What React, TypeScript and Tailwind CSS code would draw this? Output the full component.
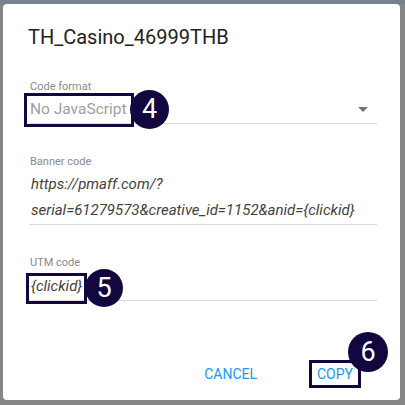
import React from 'react'

function Badge({ n, className }: { n: string; className: string }) {
  return (
    <span
      className={
        'absolute flex items-center justify-center rounded-full bg-[#12083f] text-white text-[27px] leading-none ' +
        className
      }
    >
      {n}
    </span>
  )
}

export default function App() {
  return (
    <div className="h-[405px] w-[405px] bg-[#868686] border-t-4 border-[#76828b] pl-[3px] pr-[5px] pb-[5px] font-['Roboto',sans-serif]">
      <div className="h-full w-full bg-white rounded-[4px] flex flex-col">
        {/* Title */}
        <h2 className="pt-[21px] pl-[25px] text-[20px] leading-[24px] text-[#212121]">TH_Casino_46999THB</h2>

        <div className="pl-[26px] pr-[23px] mt-[31px] flex flex-col">
          {/* Code format */}
          <div className="relative">
            <p className="pl-[1px] text-[11px] leading-[13px] text-[#8a8a8a]">Code format</p>
            <div className="flex items-center justify-between border-b border-[#dcdcdc] pt-[4px] pb-[2px] leading-[24px]">
              <span className="text-[15.5px] text-[#9e9e9e] pl-[1px]">No JavaScript</span>
              <span className="mr-[9px] w-0 h-0 border-l-[5px] border-r-[5px] border-t-[5px] border-l-transparent border-r-transparent border-t-[#757575]" />
            </div>
            <div className="absolute left-[-5px] top-[13px] w-[110px] h-[34px] border-[3px] border-[#12083f]" />
            <Badge n="4" className="left-[101px] top-[10px] w-[39px] h-[39px]" />
          </div>

          {/* Banner code */}
          <div className="mt-[31px]">
            <p className="pl-[1px] text-[11px] leading-[13px] text-[#8a8a8a]">Banner code</p>
            <div className="border-b border-[#dcdcdc] pt-[3px] pb-[1px] text-[15px] leading-[26px] italic text-[#424242] whitespace-nowrap pl-[2px]">
              <div>https://pmaff.com/?</div>
              <div>serial=61279573&amp;creative_id=1152&amp;anid={'{clickid}'}</div>
            </div>
          </div>

          {/* UTM code */}
          <div className="relative mt-[31px]">
            <p className="pl-[1px] text-[11px] leading-[13px] text-[#8a8a8a]">UTM code</p>
            <div className="border-b border-[#dcdcdc] pt-[5px] pb-[2px] leading-[24px]">
              <span className="text-[15px] italic text-[#424242] pl-[2px]">{'{clickid}'}</span>
            </div>
            <div className="absolute left-[-3px] top-[17px] w-[61px] h-[31px] border-[3px] border-[#12083f]" />
            <Badge n="5" className="left-[56px] top-[13px] w-[38px] h-[38px]" />
          </div>
        </div>

        {/* Actions */}
        <div className="mt-auto mb-[12px] flex justify-end items-center pr-[39px]">
          <button className="text-[14px] text-[#2196f3] mr-[52px]">CANCEL</button>
          <div className="relative">
            <div className="border-[3px] border-[#12083f] w-[52px] h-[28px] flex items-center justify-center">
              <span className="text-[14px] text-[#2196f3]">COPY</span>
            </div>
            <Badge n="6" className="left-[39px] top-[-28px] w-[40px] h-[40px]" />
          </div>
        </div>
      </div>
    </div>
  )
}
